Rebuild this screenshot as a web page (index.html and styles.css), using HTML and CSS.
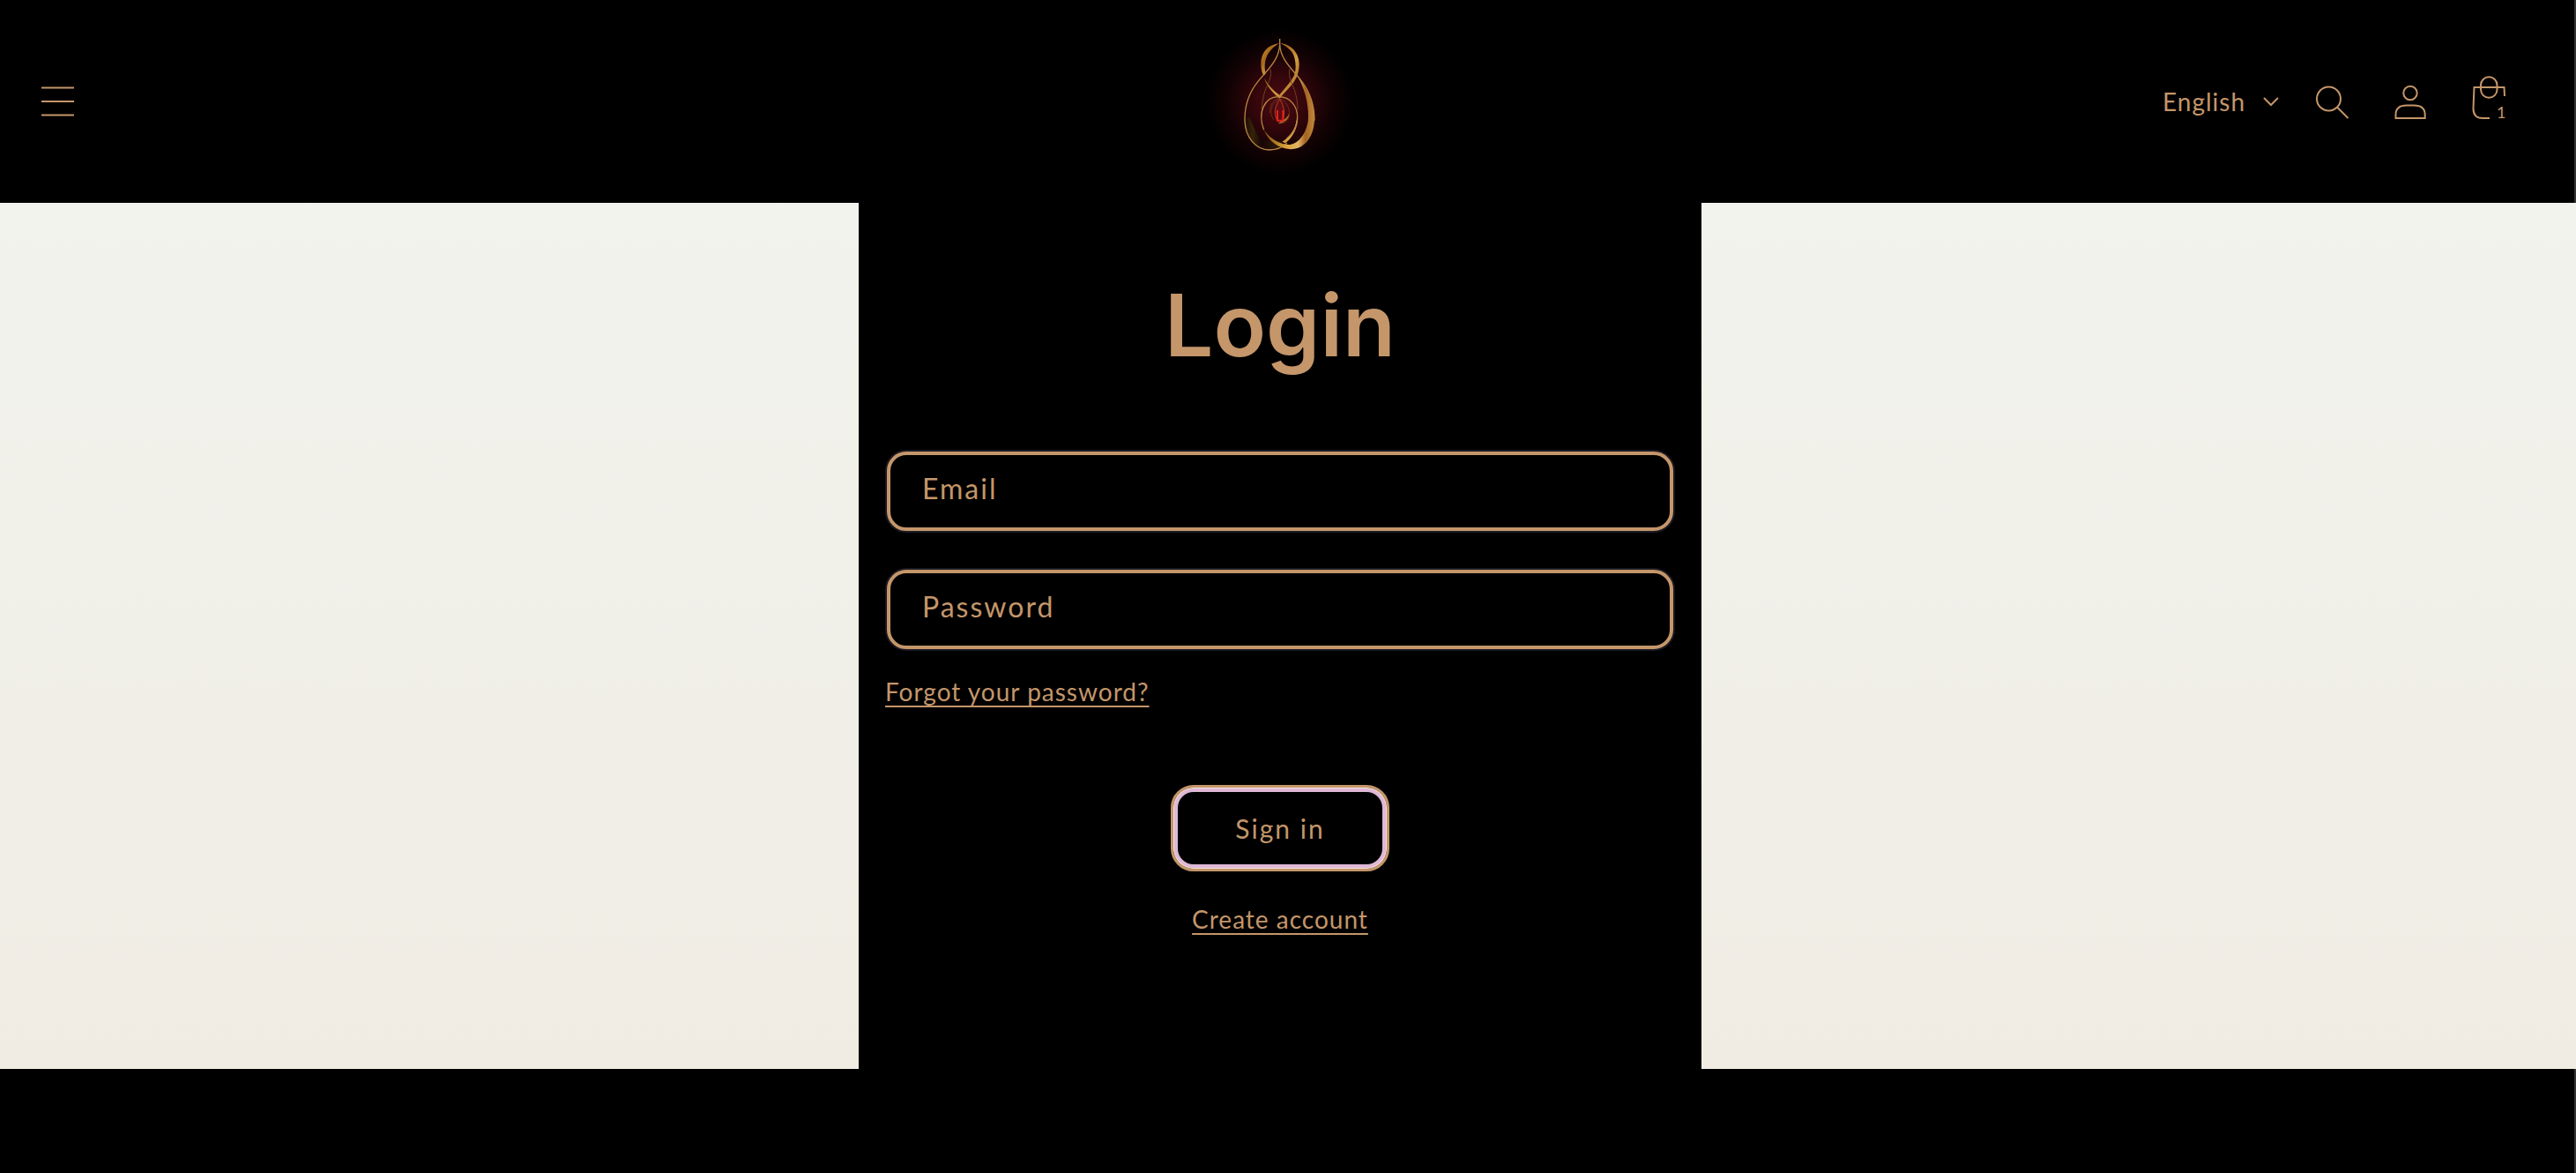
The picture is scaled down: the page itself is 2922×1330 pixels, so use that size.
FILE: index.html
```html
<!DOCTYPE html>
<html lang="en">
<head>
    <meta charset="UTF-8">
    <meta name="viewport" content="width=device-width, initial-scale=1.0">
    <title>Login</title>
    <link rel="stylesheet" href="styles.css">
</head>
<body>
    <header class="header">
        <button class="icon-button menu-button" type="button" aria-label="Menu">
            <svg viewBox="0 0 56 88" width="56" height="88">
                <path d="M9 28.500H46M9 44H46M9 59.500H46"/>
            </svg>
        </button>

        <!-- Logo -->
        <a class="logo" href="#" aria-label="Home">
            <svg viewBox="6 0 660 570" width="220" height="190">
                <defs>
                    <radialGradient id="glow" cx="335" cy="285" r="250" gradientUnits="userSpaceOnUse">
                        <stop offset="0" stop-color="#4c0b12"/>
                        <stop offset="0.35" stop-color="#33060b"/>
                        <stop offset="0.7" stop-color="#120204"/>
                        <stop offset="1" stop-color="#000"/>
                    </radialGradient>
                    <linearGradient id="gold" x1="0" y1="0" x2="1" y2="1">
                        <stop offset="0" stop-color="#d89a35"/>
                        <stop offset="0.35" stop-color="#a5671c"/>
                        <stop offset="0.6" stop-color="#d39a40"/>
                        <stop offset="1" stop-color="#96601c"/>
                    </linearGradient>
                    <linearGradient id="band" x1="290" y1="0" x2="455" y2="0" gradientUnits="userSpaceOnUse">
                        <stop offset="0" stop-color="#8a5a16"/>
                        <stop offset="0.4" stop-color="#d9a43a"/>
                        <stop offset="0.65" stop-color="#e3b566"/>
                        <stop offset="0.8" stop-color="#a5631f"/>
                        <stop offset="1" stop-color="#c08a40"/>
                    </linearGradient>
                    <linearGradient id="shade" x1="215" y1="0" x2="330" y2="0" gradientUnits="userSpaceOnUse">
                        <stop offset="0" stop-color="#1c0c05"/>
                        <stop offset="0.25" stop-color="#352409"/>
                        <stop offset="0.5" stop-color="#180406"/>
                        <stop offset="1" stop-color="#2c1a08"/>
                    </linearGradient>
                </defs>
                <ellipse cx="335" cy="285" rx="250" ry="260" fill="url(#glow)"/>
                <path fill="url(#shade)" d="M219 345C235 322 240 365 256 392C275 425 310 410 345 425C330 450 280 455 250 428C228 408 217 380 219 345Z"/>
                <path fill="url(#gold)" d="M334 87C295 92 271 117 271 158C271 177 275 190 281 197L287 190C278 151 290 111 334 87Z"/>
                <path fill="url(#gold)" d="M337 87C374 91 401 120 401 158C401 183 394 208 373 232C357 251 343 262 335 276C321 263 292 240 282 206C296 230 314 249 334 263C346 248 371 221 383 199C394 178 390 128 371 111C361 101 351 94 337 87Z"/>
                <path class="gold-line thin" d="M303 175C312 220 278 225 274 312M369 175C360 220 394 230 396 312"/>
                <path class="gold-line" d="M335 72V92C332 145 293 177 261 217C231 254 215 294 216 350C218 407 252 449 300 450C327 450 347 439 360 427"/>
                <path class="gold-line" d="M335 92C338 145 380 177 410 217C438 254 453 294 453 350"/>
                <path fill="url(#band)" d="M399 205C438 250 454 300 453 346C452 404 420 448 372 448C329 446 296 419 281 382C309 420 344 434 370 432C400 427 423 396 431 354C435 312 427 260 399 205Z"/>
                <path fill="url(#band)" d="M393 330C395 370 374 404 343 422L354 427C383 402 396 375 396 335Z"/>
                <path class="gold-line" d="M281 382C258 323 283 269 331 269C371 269 397 302 395 344C394 374 379 396 357 413"/>
                <path class="gold-line faint" d="M302 325C300 296 315 278 334 275C356 284 370 306 367 331C364 351 350 360 333 360M315 348C295 321 308 288 334 278"/>
                <path fill="#b37127" d="M367 325C368 344 350 361 328 359C347 350 362 341 367 325Z"/>
                <path class="flame" d="M335 277C315 307 316 329 326 350H346C353 322 350 302 335 277Z"/>
                <path class="flame wide" d="M327 315V350H346V315"/>
            </svg>
        </a>

        <div class="header-icons">
            <div class="language">
                <select class="language-select" aria-label="Language">
                    <option>English</option>
                </select>
                <svg class="caret" viewBox="0 0 20 12" width="20" height="12">
                    <path d="M2 2L10 10L18 2"/>
                </svg>
            </div>
            <button class="icon-button" type="button" aria-label="Search">
                <svg viewBox="0 0 88 88" width="88" height="88">
                    <circle cx="39.500" cy="41" r="13.500"/>
                    <path d="M49 50.500L61.500 63"/>
                </svg>
            </button>
            <a class="icon-button" href="#" aria-label="Account">
                <svg viewBox="0 0 88 88" width="88" height="88">
                    <circle cx="44" cy="34.500" r="7.700"/>
                    <path d="M27.500 63V59C27.500 52 32 48.500 40 48.500H48C56 48.500 60.700 52 60.700 59V63Z"/>
                </svg>
            </a>
            <a class="icon-button cart" href="#" aria-label="Cart">
                <svg viewBox="0 0 88 88" width="88" height="88">
                    <rect x="36" y="16.300" width="18.500" height="23.500" rx="9.200"/>
                    <path d="M63 38L62.500 28H28.500L27.500 52C27.500 59 31 63 38 63H46"/>
                </svg>
                <span class="cart-count">1</span>
            </a>
        </div>
    </header>

    <main class="main">
        <div class="login">
            <h1>Login</h1>
            <form>
                <div class="field">
                    <input type="email" id="email" autocomplete="email">
                    <label for="email">Email</label>
                </div>
                <div class="field">
                    <input type="password" id="password" autocomplete="current-password">
                    <label for="password">Password</label>
                </div>
                <a class="link" href="#">Forgot your password?</a>
                <div class="actions">
                    <button class="sign-in" type="submit">Sign in</button>
                    <a class="link" href="#">Create account</a>
                </div>
            </form>
        </div>
    </main>

    <footer class="footer"></footer>
</body>
</html>
```
FILE: styles.css
```css
* {
    box-sizing: border-box;
}
body {
    margin: 0;
    min-height: 100vh;
    display: flex;
    flex-direction: column;
    background: #000;
    color: #c4966a;
    font-family: Lato, "Open Sans", sans-serif;
    font-size: 30px;
    letter-spacing: 1px;
}

/* Header */
.header {
    display: grid;
    grid-template-columns: 1fr auto 1fr;
    align-items: center;
    padding: 20px 54px 20px 38px;
    border-right: 2px solid #333;
}
.header svg {
    display: block;
}
.icon-button {
    display: block;
    padding: 0;
    border: none;
    background: none;
    color: inherit;
    cursor: pointer;
}
.menu-button {
    justify-self: start;
}
.icon-button svg,
.caret {
    fill: none;
    stroke: currentColor;
    stroke-width: 2;
}
.header-icons {
    display: flex;
    align-items: center;
    justify-content: flex-end;
}
.language {
    display: flex;
    align-items: center;
    gap: 18px;
    margin-right: 16px;
}
.language-select {
    appearance: none;
    padding: 0;
    border: none;
    background: none;
    color: inherit;
    font: inherit;
    font-size: 28px;
    letter-spacing: inherit;
}
.cart {
    position: relative;
    text-decoration: none;
}
.cart-count {
    position: absolute;
    left: 54px;
    top: 44px;
    font-size: 18px;
    line-height: 24px;
}

/* Logo strokes */
.gold-line {
    fill: none;
    stroke: #b9873f;
    stroke-width: 4;
}
.gold-line.thin {
    stroke: #75421f;
    stroke-width: 3;
}
.gold-line.faint {
    stroke: #6b2a18;
    stroke-width: 3;
}
.flame {
    fill: #5c0c10;
    stroke: #b8402a;
    stroke-width: 3;
}
.flame.wide {
    fill: none;
    stroke: #e0201c;
    stroke-width: 6;
}

/* Login */
.main {
    display: flex;
    justify-content: center;
    padding-right: 18px;
    background: linear-gradient(#f1f3ec, #f0ece4);
}
.login {
    width: 956px;
    padding: 74px 30px 150px;
    background: #000;
}
h1 {
    margin: 0 0 78px;
    font-family: Inter, Lato, sans-serif;
    font-size: 98px;
    font-weight: 600;
    line-height: 130px;
    letter-spacing: 0;
    text-align: center;
}
.field {
    position: relative;
    margin-bottom: 40px;
    padding: 0 2px;
}
.field input {
    display: block;
    width: 100%;
    height: 90px;
    padding: 0 36px;
    border: 4px solid #c4966a;
    border-radius: 22px;
    outline: none;
    background: #000;
    box-shadow: 0 0 0 2px #1b1a22;
    color: inherit;
    font: inherit;
}
.field label {
    position: absolute;
    left: 42px;
    top: 22px;
    font-size: 32px;
    line-height: 40px;
    letter-spacing: 2px;
    pointer-events: none;
}
.field + .field {
    margin: 44px 0 28px;
}
.link {
    display: inline-block;
    color: inherit;
    font-size: 28px;
    line-height: 40px;
    text-decoration-thickness: 2px;
    text-underline-offset: 5px;
}
.actions {
    display: flex;
    flex-direction: column;
    align-items: center;
    gap: 34px;
    margin-top: 86px;
}
.sign-in {
    width: 248px;
    height: 98px;
    padding: 0;
    border: 3px solid #c4966a;
    border-radius: 26px;
    background: #000;
    box-shadow: inset 0 0 0 1px #f3e4d6, inset 0 0 0 5px #dfb8d6;
    color: inherit;
    font: inherit;
    letter-spacing: 2px;
    cursor: pointer;
}

.footer {
    flex: 1;
    min-height: 120px;
    border-right: 2px solid #333;
}
```
